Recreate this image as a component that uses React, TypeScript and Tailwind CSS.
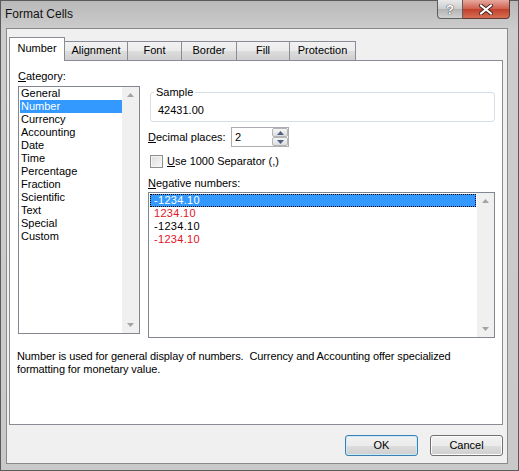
import React from "react";

const categories = [
  "General",
  "Number",
  "Currency",
  "Accounting",
  "Date",
  "Time",
  "Percentage",
  "Fraction",
  "Scientific",
  "Text",
  "Special",
  "Custom",
];

const tabs = [
  { label: "Number", w: "w-[56px]" },
  { label: "Alignment", w: "w-[64px]" },
  { label: "Font", w: "w-[55px]" },
  { label: "Border", w: "w-[56px]" },
  { label: "Fill", w: "w-[54px]" },
  { label: "Protection", w: "w-[67px]" },
];

const negatives = [
  { text: "-1234.10", color: "text-white" },
  { text: "1234.10", color: "text-[#e0141e]" },
  { text: "-1234.10", color: "text-black" },
  { text: "-1234.10", color: "text-[#e0141e]" },
];

function Arrow({ down }: { down?: boolean }) {
  return (
    <svg width="7" height="4" viewBox="0 0 7 4" className="block">
      {down ? (
        <path d="M0 0h7L3.5 4z" fill="#a3a3a3" />
      ) : (
        <path d="M0 4h7L3.5 0z" fill="#a3a3a3" />
      )}
    </svg>
  );
}

function ScrollBar() {
  return (
    <div className="flex w-[17px] flex-col items-center justify-between bg-[#f0f0f0] py-[6px]">
      <Arrow />
      <Arrow down />
    </div>
  );
}

export default function App() {
  return (
    <div className="flex h-[471px] w-[519px] flex-col bg-[linear-gradient(to_bottom,#b8b8b8,#cdcdcd_30px,#c9c9c9)] font-['Liberation_Sans',Arial,sans-serif] text-[11px] leading-[13px] text-black shadow-[inset_0_0_0_1px_#5a5a5a]">
      {/* title bar */}
      <div className="flex h-[29px] shrink-0 items-start justify-between pl-[5px] pr-[9px]">
        <span className="mt-[7px] text-[12px] leading-[15px] text-[#111]">Format Cells</span>
        <div className="flex">
          <div className="flex h-[19px] w-[26px] items-center justify-center rounded-bl-[4px] border border-t-0 border-[#5e5e5e] bg-[linear-gradient(to_bottom,#e9e9e9,#cdcdcd_48%,#b4b4b4_52%,#d0d0d0)] text-[13px] font-bold text-white [text-shadow:0_0_1px_#333,0_0_1px_#333]">
            ?
          </div>
          <div className="flex h-[19px] w-[47px] items-center justify-center rounded-br-[4px] border border-t-0 border-l-0 border-[#5e3a36] bg-[linear-gradient(to_bottom,#e7a99f,#d0614f_48%,#c0402b_52%,#d76f52)]">
            <svg width="14" height="11" viewBox="0 0 14 11">
              <path d="M2 1.5l10 8M12 1.5l-10 8" stroke="#4a2520" strokeWidth="4" strokeLinecap="square" />
              <path d="M2 1.5l10 8M12 1.5l-10 8" stroke="#fff" strokeWidth="2" strokeLinecap="square" />
            </svg>
          </div>
        </div>
      </div>

      {/* client area */}
      <div className="mb-[8px] ml-[7px] mr-[12px] flex flex-1 flex-col bg-[#f0f0f0] pl-[2px] pr-[4px] pt-[8px] shadow-[0_0_0_1px_#8a8a8a]">
        {/* tabs */}
        <div className="relative z-10 flex h-[23px] items-end">
          {tabs.map((t, i) =>
            i === 0 ? (
              <div
                key={t.label}
                className={`${t.w} -mb-px flex h-[24px] items-start justify-center border border-b-0 border-[#898c95] bg-white pt-[4px]`}
              >
                {t.label}
              </div>
            ) : (
              <div
                key={t.label}
                className={`${t.w} -ml-px flex h-[19px] items-center justify-center border border-b-0 border-[#898c95] bg-[linear-gradient(to_bottom,#f2f2f2,#ebebeb_50%,#dddddd_51%,#cfcfcf)] pb-[1px]`}
              >
                {t.label}
              </div>
            )
          )}
        </div>

        {/* tab page */}
        <div className="flex h-[365px] flex-col border border-[#898c95] bg-white">
          <div className="flex gap-[8px] pl-[8px]">
            {/* category column */}
            <div className="flex w-[122px] flex-col">
              <div className="mt-[8px] h-[14px] leading-[14px]">
                <span className="underline">C</span>ategory:
              </div>
              <div className="mt-[3px] flex h-[248px] border border-[#828790] bg-white">
                <div className="flex flex-1 flex-col pl-[1px]">
                  {categories.map((c) => (
                    <div
                      key={c}
                      className={`h-[13px] pl-[1px] leading-[13px] ${c === "Number" ? "bg-[#3399ff] text-white" : ""}`}
                    >
                      {c}
                    </div>
                  ))}
                </div>
                <ScrollBar />
              </div>
            </div>

            {/* options column */}
            <div className="flex w-[347px] flex-col">
              <fieldset className="ml-[2px] mt-[24px] h-[37px] rounded-[3px] border border-[#d5dfe5] pl-[3px]">
                <legend className="px-[2px] leading-[14px]">Sample</legend>
                <div className="ml-[4px] mt-[5px]">42431.00</div>
              </fieldset>

              <div className="mt-[5px] flex h-[20px] items-center">
                <span className="w-[83px]">
                  <span className="underline">D</span>ecimal places:
                </span>
                <div className="flex h-[20px] w-[58px] border border-[#abadb3] bg-white">
                  <span className="flex-1 pl-[3px] leading-[18px]">2</span>
                  <div className="flex w-[16px] flex-col">
                    <div className="flex flex-1 items-center justify-center rounded-[2px] border border-[#b5b5b5] bg-[linear-gradient(to_bottom,#f6f6f6,#dcdcdc)]">
                      <svg width="7" height="4" viewBox="0 0 7 4"><path d="M0 4h7L3.5 0z" fill="#4d6185" /></svg>
                    </div>
                    <div className="flex flex-1 items-center justify-center rounded-[2px] border border-[#b5b5b5] bg-[linear-gradient(to_bottom,#f6f6f6,#dcdcdc)]">
                      <svg width="7" height="4" viewBox="0 0 7 4"><path d="M0 0h7L3.5 4z" fill="#4d6185" /></svg>
                    </div>
                  </div>
                </div>
              </div>

              <div className="mt-[8px] flex h-[13px] items-center pl-[2px]">
                <div className="h-[13px] w-[13px] border border-[#8f8f8f] bg-[linear-gradient(to_bottom_right,#dcdcdc,#f8f8f8)] shadow-[inset_0_0_0_1px_#f4f4f4]" />
                <span className="ml-[4px]">
                  <span className="underline">U</span>se 1000 Separator (,)
                </span>
              </div>

              <div className="mt-[8px] h-[14px] leading-[14px]">
                <span className="underline">N</span>egative numbers:
              </div>

              <div className="mt-[2px] flex h-[146px] border border-[#828790] bg-white">
                <div className="flex flex-1 flex-col p-[1px]">
                  {negatives.map((n, i) => (
                    <div
                      key={i}
                      className={`h-[13px] pl-[4px] leading-[12px] tracking-[0.3px] ${n.color} ${i === 0 ? "bg-[#3399ff] outline-1 outline-dotted outline-offset-[-1px] outline-black" : ""}`}
                    >
                      {n.text}
                    </div>
                  ))}
                </div>
                <ScrollBar />
              </div>
            </div>
          </div>

          <p className="mt-[12px] pl-[7px] leading-[13px] tracking-[-0.1px]">
            Number is used for general display of numbers.&nbsp; Currency and Accounting offer specialized
            <br />
            formatting for monetary value.
          </p>
        </div>

        {/* buttons */}
        <div className="mt-[10px] flex justify-end gap-[12px]">
          <button className="h-[21px] w-[73px] rounded-[3px] border border-[#3c7fb1] bg-[linear-gradient(to_bottom,#f2f2f2,#ebebeb_50%,#dddddd_51%,#cfcfcf)] shadow-[inset_0_0_0_1px_#c8eafb]">
            OK
          </button>
          <button className="h-[21px] w-[73px] rounded-[3px] border border-[#707070] bg-[linear-gradient(to_bottom,#f2f2f2,#ebebeb_50%,#dddddd_51%,#cfcfcf)] shadow-[inset_0_0_0_1px_#fcfcfc]">
            Cancel
          </button>
        </div>
      </div>
    </div>
  );
}
